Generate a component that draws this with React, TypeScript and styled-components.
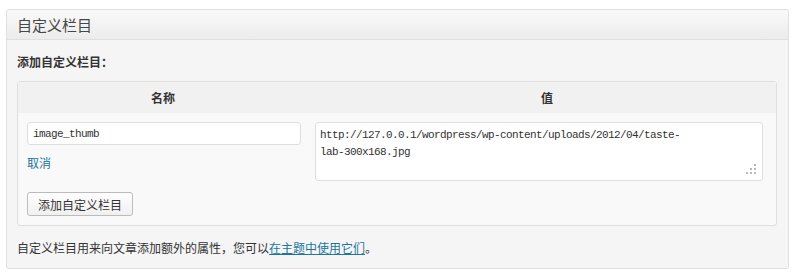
import React from "react";
import styled, { createGlobalStyle } from "styled-components";

const Global = createGlobalStyle`
  html, body { margin: 0; padding: 0; background: #ffffff; }
  body {
    font-family: "Noto Sans CJK SC", "Noto Sans", sans-serif;
    font-size: 12px;
    color: #333333;
  }
  * { box-sizing: border-box; }
`;

const Page = styled.div`
  padding: 9px 0 0 6px;
`;

const Postbox = styled.div`
  width: 783px;
  border: 1px solid #dfdfdf;
  border-radius: 3px;
  background: #f5f5f5;
`;

const BoxHeader = styled.h3`
  margin: 0;
  height: 30px;
  padding: 0 10px;
  display: flex;
  align-items: center;
  border-bottom: 1px solid #dfdfdf;
  background: linear-gradient(to bottom, #f9f9f9, #ececec);
  font-size: 15px;
  font-weight: normal;
  color: #464646;
  border-radius: 3px 3px 0 0;
`;

const BoxBody = styled.div`
  padding: 0 11px 0 10px;
`;

const SectionTitle = styled.p`
  margin: 0;
  height: 41px;
  display: flex;
  align-items: center;
  padding-top: 2px;
  font-weight: bold;
  font-size: 12px;
  color: #333333;
`;

const FieldTable = styled.div`
  border: 1px solid #dfdfdf;
  border-radius: 3px;
  background: #f9f9f9;
  display: grid;
  grid-template-columns: 290px 1fr;
`;

const HeadCell = styled.div<{ $shift?: number }>`
  height: 31px;
  background: #f1f1f1;
  display: flex;
  align-items: center;
  justify-content: center;
  padding-left: ${(p) => p.$shift ?? 0}px;
  font-weight: bold;
  font-size: 12px;
  color: #333333;
`;

const NameCell = styled.div`
  padding: 9px 7px 9px 9px;
  display: flex;
  flex-direction: column;
  align-items: flex-start;
`;

const ValueCell = styled.div`
  padding: 9px 12px 0 7px;
`;

const monoFont = `"Liberation Mono", "DejaVu Sans Mono", monospace`;

const NameInput = styled.input`
  width: 274px;
  height: 23px;
  border: 1px solid #dfdfdf;
  border-radius: 3px;
  background: #ffffff;
  padding: 0 5px;
  font-family: ${monoFont};
  font-size: 11px;
  letter-spacing: -0.6px;
  color: #333333;
  outline: none;
`;

const AreaWrap = styled.div`
  position: relative;
  width: 448px;
  height: 59px;
`;

const ValueArea = styled.div`
  width: 448px;
  height: 59px;
  border: 1px solid #dfdfdf;
  border-radius: 3px;
  background: #ffffff;
  padding: 4px 4px;
  font-family: ${monoFont};
  font-size: 11px;
  letter-spacing: -0.6px;
  line-height: 17px;
  color: #333333;
  outline: none;
  overflow: hidden;
  word-wrap: break-word;
`;

const NoBreak = styled.span`
  white-space: nowrap;
`;

const Grip = styled.svg`
  position: absolute;
  right: 7px;
  bottom: 7px;
`;

const CancelLink = styled.a`
  margin-top: 10px;
  color: #21759b;
  text-decoration: none;
  font-size: 12px;
  line-height: 16px;
`;

const AddButton = styled.button`
  margin-top: 21px;
  height: 24px;
  padding: 0 10px;
  border: 1px solid #bbbbbb;
  border-radius: 3px;
  background: linear-gradient(to bottom, #fefefe, #f0f0f0);
  font-family: "Noto Sans CJK SC", "Noto Sans", sans-serif;
  font-size: 12px;
  color: #333333;
`;

const Note = styled.p`
  margin: 0;
  height: 42px;
  display: flex;
  align-items: center;
  font-size: 12px;
  color: #333333;
`;

const NoteLink = styled.a`
  color: #21759b;
  text-decoration: underline;
`;

export default function App() {
  return (
    <>
      <Global />
      <Page>
        <Postbox>
          <BoxHeader>自定义栏目</BoxHeader>
          <BoxBody>
            <SectionTitle>添加自定义栏目：</SectionTitle>
            <FieldTable>
              <HeadCell>名称</HeadCell>
              <HeadCell $shift={10}>值</HeadCell>
              <NameCell>
                <NameInput defaultValue="image_thumb" />
                <CancelLink href="#">取消</CancelLink>
                <AddButton>添加自定义栏目</AddButton>
              </NameCell>
              <ValueCell>
                <AreaWrap>
                  <ValueArea role="textbox" aria-multiline="true" contentEditable suppressContentEditableWarning>
                    http://127.0.0.1/wordpress/wp-content/uploads/2012/04/taste-<NoBreak>lab-300x168.jpg</NoBreak>
                  </ValueArea>
                  <Grip width="10" height="10" viewBox="0 0 10 10">
                    <rect x="8" y="0" width="2" height="2" fill="#b8b8b8" />
                    <rect x="4" y="4" width="2" height="2" fill="#b8b8b8" />
                    <rect x="8" y="4" width="2" height="2" fill="#b8b8b8" />
                    <rect x="0" y="8" width="2" height="2" fill="#b8b8b8" />
                    <rect x="4" y="8" width="2" height="2" fill="#b8b8b8" />
                    <rect x="8" y="8" width="2" height="2" fill="#b8b8b8" />
                  </Grip>
                </AreaWrap>
              </ValueCell>
            </FieldTable>
            <Note>
              <span>
                自定义栏目用来向文章添加额外的属性，您可以
                <NoteLink href="#">在主题中使用它们</NoteLink>。
              </span>
            </Note>
          </BoxBody>
        </Postbox>
      </Page>
    </>
  );
}
